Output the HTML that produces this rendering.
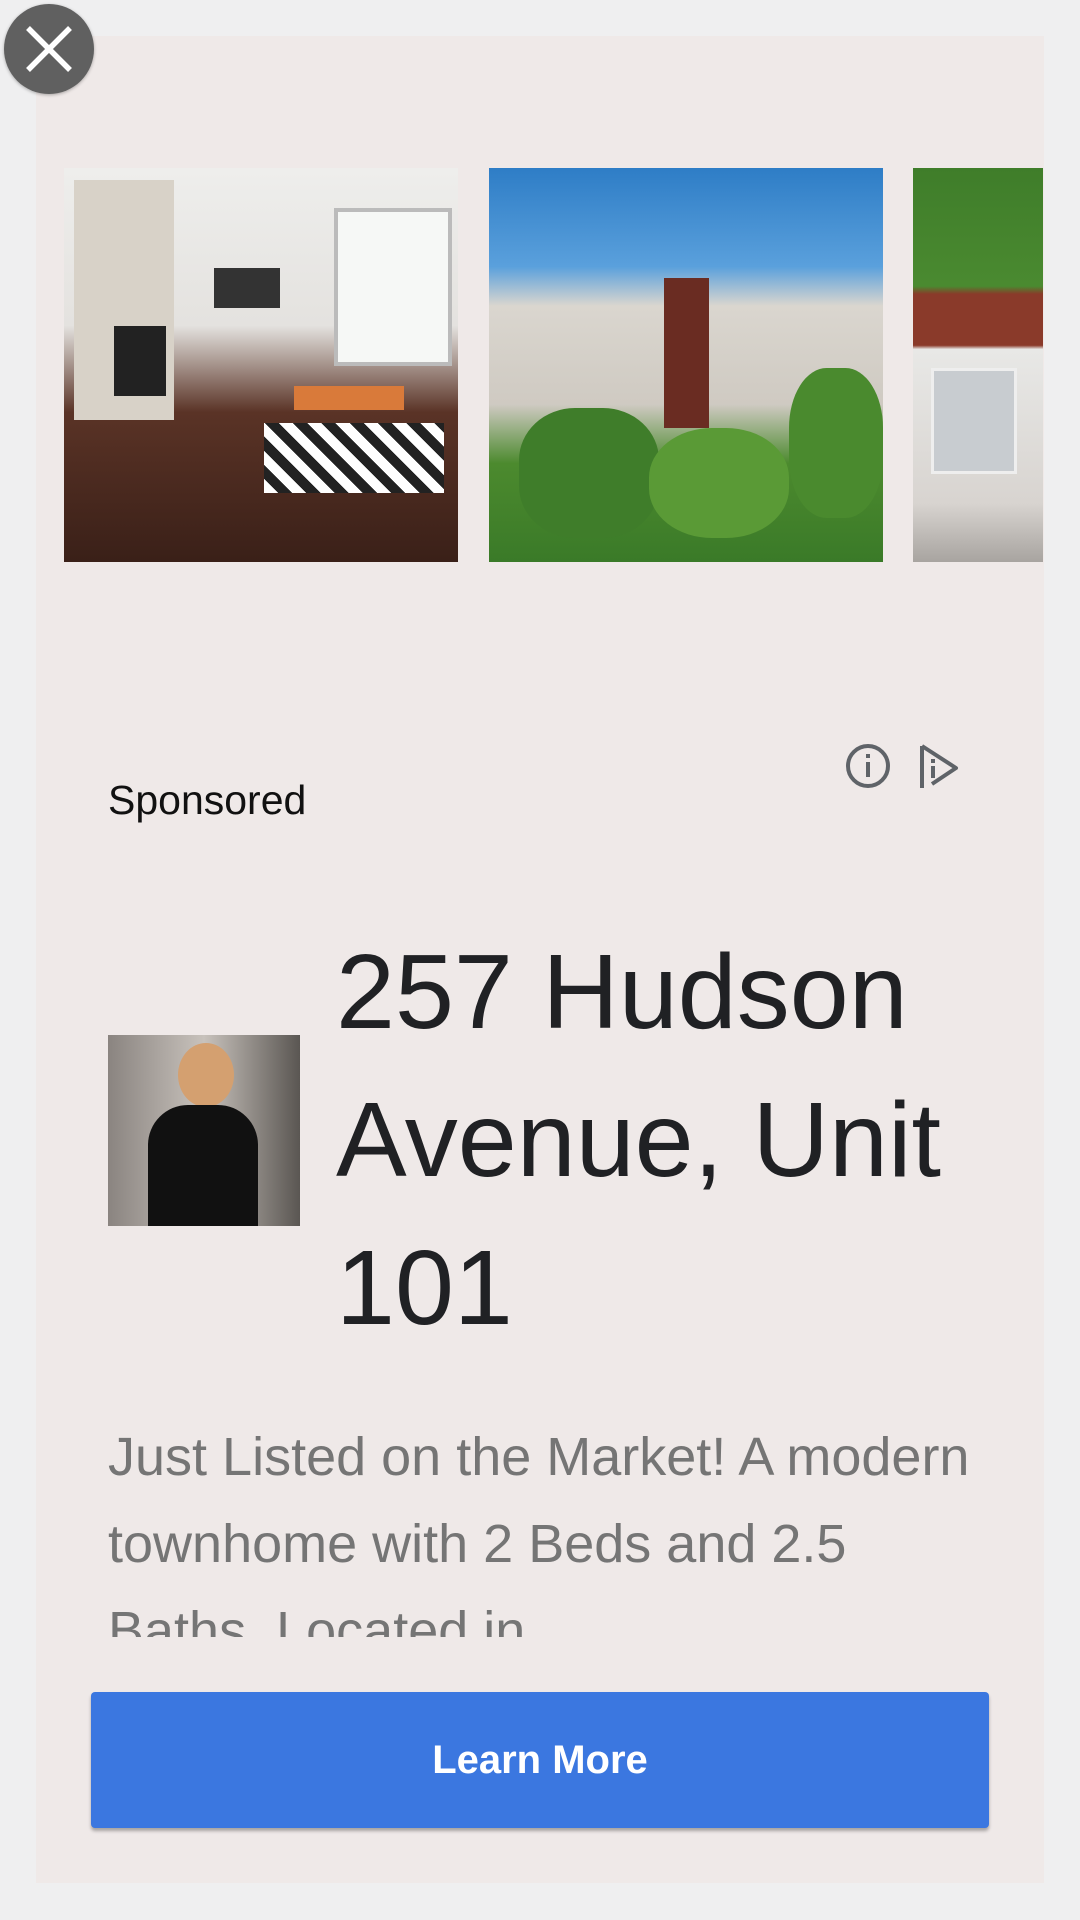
<!DOCTYPE html>
<html><head><meta charset="utf-8"><style>
body{margin:0;width:1080px;height:1920px;background:#efeff0;position:relative;overflow:hidden;font-family:"Liberation Sans",Roboto,sans-serif}
.card{position:absolute;left:36px;top:36px;width:1008px;height:1847px;background:#efe9e8}
.close{position:absolute;left:4px;top:4px;width:90px;height:90px;border-radius:50%;background:#606060;box-shadow:0 1px 3px rgba(0,0,0,.3)}
.img{position:absolute;top:168px;height:394px}
.a{position:absolute}
</style></head><body>
<div class="card"></div>
<div class="img" style="left:64px;width:394px;background:linear-gradient(180deg,#eeeeec 0%,#e4e2df 40%,#5a3326 62%,#3a2018 100%)">
 <div class="a" style="left:10px;top:12px;width:100px;height:240px;background:#d8d2c8"></div>
 <div class="a" style="left:50px;top:158px;width:52px;height:70px;background:#222"></div>
 <div class="a" style="left:150px;top:100px;width:66px;height:40px;background:#333"></div>
 <div class="a" style="left:270px;top:40px;width:110px;height:150px;background:#f6f8f6;border:4px solid #bbb"></div>
 <div class="a" style="left:200px;top:255px;width:180px;height:70px;background:repeating-linear-gradient(45deg,#fff 0 10px,#222 10px 20px)"></div>
 <div class="a" style="left:230px;top:218px;width:110px;height:24px;background:#d97a3a"></div>
</div>
<div class="img" style="left:489px;width:394px;background:linear-gradient(180deg,#2e7dc6 0%,#5aa0dc 25%,#dad6cf 35%,#cfcac2 60%,#4c8a2e 75%,#3a7a28 100%)">
 <div class="a" style="left:175px;top:110px;width:45px;height:150px;background:#6a2c22"></div>
 <div class="a" style="left:30px;top:240px;width:140px;height:130px;background:#3f7d2a;border-radius:40%"></div>
 <div class="a" style="left:160px;top:260px;width:140px;height:110px;background:#5a9a36;border-radius:45%"></div>
 <div class="a" style="left:300px;top:200px;width:94px;height:150px;background:#4a8a2e;border-radius:40%"></div>
</div>
<div class="img" style="left:913px;width:130px;background:linear-gradient(180deg,#3f7d2a 0%,#4a8a30 30%,#8a3a2a 32%,#8a3a2a 45%,#e8e8e6 46%,#d8d4d0 85%,#a8a4a0 100%)">
 <div class="a" style="left:18px;top:200px;width:80px;height:100px;background:#c8ccd0;border:3px solid #eee"></div>
</div>
<div class="close"><svg width="90" height="90" viewBox="0 0 90 90"><path d="M24 24L66 66M66 24L24 66" stroke="#fff" stroke-width="5.5"/></svg></div>
<div class="a" style="left:108px;top:777px;font-size:41px;color:#111">Sponsored</div>
<svg class="a" style="left:844px;top:742px" width="120" height="50" viewBox="0 0 120 50">
 <circle cx="24" cy="24" r="20" fill="none" stroke="#5f6368" stroke-width="4"/>
 <rect x="22" y="20" width="4" height="15" fill="#5f6368"/><rect x="22" y="12" width="4" height="4" fill="#5f6368"/>
 <path d="M78 4L78 46M78 4L112 26L88 42" fill="none" stroke="#5f6368" stroke-width="4" stroke-linejoin="round"/>
 <rect x="87" y="24" width="4" height="12" fill="#5f6368"/><rect x="87" y="17" width="4" height="4" fill="#5f6368"/>
</svg>
<div class="a" style="left:108px;top:1035px;width:192px;height:191px;background:linear-gradient(90deg,#8a8480,#c8c2bc 50%,#5a5652)">
 <div class="a" style="left:70px;top:8px;width:56px;height:64px;border-radius:50%;background:#d4a070"></div>
 <div class="a" style="left:40px;top:70px;width:110px;height:121px;border-radius:40px 40px 0 0;background:#111"></div>
</div>
<div class="a" style="left:336px;top:918px;font-size:106px;line-height:148px;color:#202124">257 Hudson<br>Avenue, Unit<br>101</div>
<div class="a" style="left:108px;top:1414px;width:880px;height:223px;overflow:hidden;font-size:54px;line-height:87px;color:#757575">Just Listed on the Market! A modern townhome with 2 Beds and 2.5 Baths. Located in</div>
<div class="a" style="left:91px;top:1692px;width:898px;height:136px;background:#3b77e0;border-radius:4px;box-shadow:0 3px 3px rgba(0,0,0,.3);color:#fff;font-weight:bold;font-size:40px;line-height:136px;text-align:center">Learn More</div>
</body></html>
